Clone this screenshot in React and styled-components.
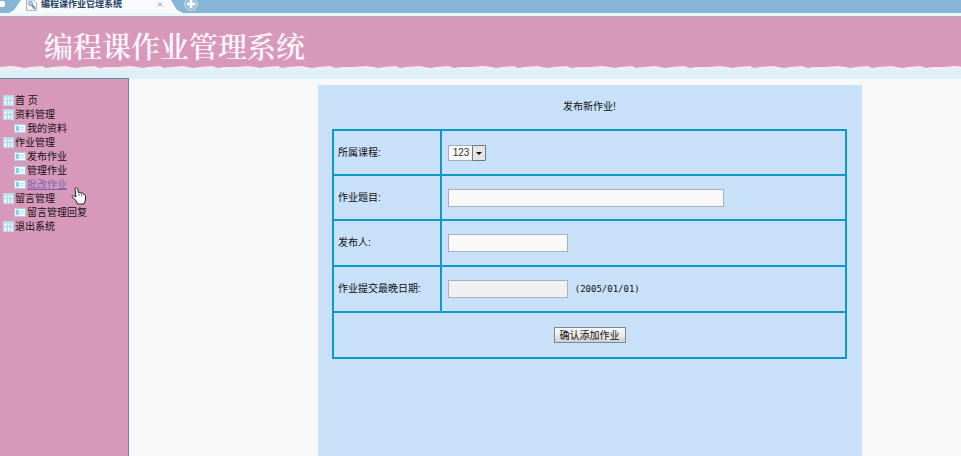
import React from "react";
import styled, { createGlobalStyle } from "styled-components";

const GlobalStyle = createGlobalStyle`
  *, *::before, *::after { box-sizing: border-box; }
  body {
    margin: 0;
    background: #f8f8f8;
    color: #111;
    font-family: "Liberation Sans", "Noto Sans CJK SC", sans-serif;
    font-size: 10px;
    line-height: 14px;
  }
`;

const Page = styled.div`
  display: flex;
  flex-direction: column;
  min-height: 100vh;
`;

const TabStrip = styled.div`
  display: flex;
  align-items: flex-start;
  height: 16px;
  overflow: hidden;
  background: #87b5d5;
  border-bottom: 3px solid #eaf6fa;
`;

const PreviousTab = styled.div`
  flex: none;
  width: 5px;
  height: 6px;
  margin: 1px 4px 0 0;
  background: #f8fcff;
  border-radius: 0 2px 2px 0;
`;

const Tab = styled.div`
  display: flex;
  align-items: flex-start;
  flex: none;
  width: 174px;
  height: 13px;
  padding: 0 20px 0 17px;
  background: #f8fafc;
  clip-path: polygon(12px 0, 162px 0, 168px 10px, 174px 13px, 0 13px, 5px 10px);
`;

const TabTitle = styled.span`
  flex: 1;
  margin-left: 4px;
  color: #1d4564;
  font-size: 9px;
  font-weight: 700;
  line-height: 9px;
  white-space: nowrap;
`;

const TabButton = styled.button`
  display: flex;
  flex: none;
  padding: 0;
  border: 0;
  background: none;
`;

const Banner = styled.header`
  background: linear-gradient(#c9a0c4 0, #d69ab6 5px, #d898b9 16px);
`;

const BannerTitle = styled.h1`
  margin: 0;
  padding: 10px 44px 0;
  color: #fdf5fb;
  font-family: "Noto Serif CJK SC", "Noto Sans CJK SC", serif;
  font-size: 29px;
  font-weight: 600;
  line-height: 40px;
`;

const TornEdge = styled.svg`
  display: block;
  width: 100%;
  height: 4px;
`;

const Divider = styled.div`
  height: 8px;
  background: #dfeff6;
`;

const Body = styled.div`
  display: flex;
  flex: 1;
`;

const Sidebar = styled.nav`
  flex: none;
  width: 129px;
  padding-top: 15px;
  background: #d898b9;
  border: solid #5b8cab;
  border-width: 1px 1px 0 0;
`;

const Menu = styled.ul`
  margin: 0;
  padding: 0;
  list-style: none;
`;

const MenuItem = styled.li`
  position: relative;
  display: flex;
  align-items: center;
  gap: 1px;
  height: 14px;
  padding-left: ${(p) => (p.$nested ? 14 : 3)}px;
`;

const MenuLink = styled.a`
  color: ${(p) => (p.$hovered ? "#7d62b5" : "#111")};
  text-decoration: ${(p) => (p.$hovered ? "underline" : "none")};
  white-space: nowrap;
`;

const Pointer = styled.svg`
  position: absolute;
  left: 71px;
  top: 9px;
  z-index: 1;
`;

const Main = styled.main`
  display: flex;
  flex: 1;
  padding: 6px 99px 0 189px;
  border-top: 1px solid #dfeff6;

  @media (max-width: 800px) {
    padding-left: 16px;
    padding-right: 16px;
  }
`;

const Panel = styled.form`
  flex: 1;
  padding: 15px 15px 20px 14px;
  background: #c8e0f8;
`;

const PanelTitle = styled.h2`
  margin: 0 0 15px;
  font-size: 10px;
  font-weight: 400;
  line-height: 14px;
  text-align: center;
`;

const FormTable = styled.table`
  width: 100%;
  table-layout: fixed;
  border-collapse: collapse;
  border: 2px solid #0e9ac4;
`;

const FormRow = styled.tr`
  height: ${(p) => (p.$tall ? 46 : 45)}px;
`;

const LabelCell = styled.th`
  width: 21%;
  padding: 0 0 0 4px;
  border: 2px solid #0e9ac4;
  font-weight: 400;
  text-align: left;
`;

const FieldCell = styled.td`
  padding: 0 6px;
  border: 2px solid #0e9ac4;
`;

const ActionCell = styled.td`
  padding: 0;
  text-align: center;
`;

const Field = styled.div`
  display: flex;
  align-items: center;
  gap: 7px;
`;

const TextInput = styled.input`
  width: ${(p) => (p.$wide ? 276 : 120)}px;
  max-width: 100%;
  height: 18px;
  padding: 0 3px;
  background: ${(p) => (p.$muted ? "#f0f0f0" : "#f9f9f9")};
  border: 1px solid #a9afb8;
  font: inherit;
`;

const SelectBox = styled.div`
  position: relative;
  display: flex;
  width: 38px;
  height: 16px;
`;

const Select = styled.select`
  appearance: none;
  width: 100%;
  padding: 0 14px 0 4px;
  background: #f9f9f9;
  border: 1px solid #a4b0bd;
  border-radius: 0;
  color: #333;
  font: inherit;
`;

const SelectArrow = styled.svg`
  position: absolute;
  right: 0;
  top: 0;
  pointer-events: none;
`;

const Hint = styled.span`
  font-family: "DejaVu Sans Mono", monospace;
  font-size: 9px;
`;

const SubmitButton = styled.button`
  height: 16px;
  padding: 0 5px;
  background: linear-gradient(#f8f8f8, #eeeeee 45%, #cfcfcf);
  border: 1px solid #7d8790;
  color: #111;
  font: inherit;
  line-height: 13px;
`;

function GridIcon() {
  return (
    <svg width="11" height="12" viewBox="0 0 11 12" aria-hidden="true">
      <rect x="0" y="0" width="11" height="11" fill="#e4f4fa" />
      <path d="M.5 .5h10v10H.5z" fill="none" stroke="#b3d6e6" />
      <path d="M1 2h9" stroke="#a5d3ea" />
      <path d="M1 5.5h9M4.5 3v7M7.5 3v7" stroke="#add4e6" />
    </svg>
  );
}

function CardIcon() {
  return (
    <svg width="12" height="10" viewBox="0 0 12 10" aria-hidden="true">
      <rect x="0" y="0" width="12" height="9" fill="#f1faff" />
      <path d="M.5 .5h11v8H.5z" fill="none" stroke="#a6cfe6" />
      <rect x="2" y="2" width="3" height="5" fill="#93c8e6" />
      <path d="M6 3.5h4M6 5.500h3" stroke="#c0e0ee" />
    </svg>
  );
}

function HandPointer() {
  return (
    <Pointer width="15" height="18" viewBox="0 0 15 18" aria-hidden="true">
      <path
        d="M4 1.5C4 .5 6 .5 6.5 1.5L7.5 6l.5-.5c1-.5 2 0 2 1 1-1 2.5-.5 2.5 1 1.5-.5 2 .5 2 1.5v4L13 17H6.5L5 13.500 1 10c-.5-1 1-2 2-1l2 1z"
        fill="#fff"
        stroke="#2b2028"
      />
      <path d="M8 6.5V9M10.5 7.5V9.500" stroke="#6b6066" />
    </Pointer>
  );
}

const MENU = [
  { label: "首 页" },
  { label: "资料管理" },
  { label: "我的资料", nested: true },
  { label: "作业管理" },
  { label: "发布作业", nested: true },
  { label: "管理作业", nested: true },
  { label: "批改作业", nested: true, hovered: true },
  { label: "留言管理" },
  { label: "留言管理回复", nested: true },
  { label: "退出系统" },
];

export default function App() {
  return (
    <Page>
      <GlobalStyle />
      <TabStrip>
        <PreviousTab />
        <Tab>
          <svg width="11" height="11" viewBox="0 0 11 11" aria-hidden="true">
            <path d="M.5 0h7l3 3v7.5H.5z" fill="#f3f6f8" stroke="#a9b8c3" />
            <circle cx="4.5" cy="3.5" r="2" fill="#b8d5df" stroke="#7fa0b2" />
            <path d="M6 5l3 4" stroke="#67869a" strokeWidth="2" />
          </svg>
          <TabTitle>编程课作业管理系统</TabTitle>
          <TabButton type="button" aria-label="关闭标签">
            <svg width="6" height="8" viewBox="0 0 6 8">
              <path d="M1 2.5l4 4M5 2.5l-4 4" stroke="#8997a2" />
            </svg>
          </TabButton>
        </Tab>
        <TabButton type="button" aria-label="新建标签">
          <svg width="16" height="12" viewBox="0 0 16 12">
            <circle cx="8" cy="4" r="6.5" fill="#9fc4dc" stroke="#c4dcea" />
            <path d="M8 0v8M4 4h8" stroke="#fff" strokeWidth="2.5" />
          </svg>
        </TabButton>
      </TabStrip>

      <Banner>
        <BannerTitle>编程课作业管理系统</BannerTitle>
        <TornEdge aria-hidden="true">
          <defs>
            <pattern id="torn" width="118" height="4" patternUnits="userSpaceOnUse">
              <path
                d="M0 1L12 0L20 1L24 2L30 1L42 0L46 2L52 1L66 0L70 1L76 2L82 1L94 0L100 2L106 1L118 1V4H0Z"
                fill="#f1eaf4"
              />
              <path d="M0 3.5h118" stroke="#e5f1f8" />
            </pattern>
          </defs>
          <rect width="100%" height="4" fill="url(#torn)" />
        </TornEdge>
      </Banner>
      <Divider />

      <Body>
        <Sidebar>
          <Menu>
            {MENU.map(({ label, nested, hovered }) => (
              <MenuItem key={label} $nested={nested}>
                {nested ? <CardIcon /> : <GridIcon />}
                <MenuLink href="#" $hovered={hovered}>
                  {label}
                </MenuLink>
                {hovered && <HandPointer />}
              </MenuItem>
            ))}
          </Menu>
        </Sidebar>

        <Main>
          <Panel onSubmit={(e) => e.preventDefault()}>
            <PanelTitle>发布新作业!</PanelTitle>
            <FormTable>
              <tbody>
                <FormRow>
                  <LabelCell scope="row">
                    <label htmlFor="course">所属课程:</label>
                  </LabelCell>
                  <FieldCell>
                    <SelectBox>
                      <Select id="course" defaultValue="123">
                        <option>123</option>
                      </Select>
                      <SelectArrow width="14" height="16" viewBox="0 0 14 16" aria-hidden="true">
                        <path d="M.5 .5h13v15H.5z" fill="#e2e4e5" stroke="#707a83" />
                        <path d="M4 7h6L7 10z" fill="#111" />
                      </SelectArrow>
                    </SelectBox>
                  </FieldCell>
                </FormRow>
                <FormRow>
                  <LabelCell scope="row">
                    <label htmlFor="title">作业题目:</label>
                  </LabelCell>
                  <FieldCell>
                    <Field>
                      <TextInput id="title" type="text" $wide />
                    </Field>
                  </FieldCell>
                </FormRow>
                <FormRow $tall>
                  <LabelCell scope="row">
                    <label htmlFor="publisher">发布人:</label>
                  </LabelCell>
                  <FieldCell>
                    <Field>
                      <TextInput id="publisher" type="text" />
                    </Field>
                  </FieldCell>
                </FormRow>
                <FormRow $tall>
                  <LabelCell scope="row">
                    <label htmlFor="deadline">作业提交最晚日期:</label>
                  </LabelCell>
                  <FieldCell>
                    <Field>
                      <TextInput id="deadline" type="text" $muted />
                      <Hint>(2005/01/01)</Hint>
                    </Field>
                  </FieldCell>
                </FormRow>
                <FormRow $tall>
                  <ActionCell colSpan={2}>
                    <SubmitButton type="submit">确认添加作业</SubmitButton>
                  </ActionCell>
                </FormRow>
              </tbody>
            </FormTable>
          </Panel>
        </Main>
      </Body>
    </Page>
  );
}
